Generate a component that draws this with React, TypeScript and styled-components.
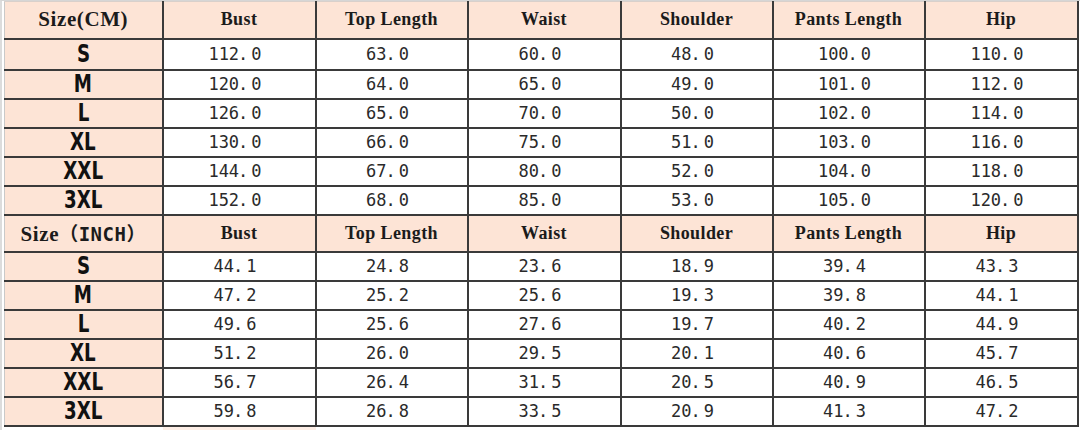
import styled, { createGlobalStyle } from "styled-components";

const GlobalStyle = createGlobalStyle`
  html, body {
    margin: 0;
    padding: 0;
    background: #ffffff;
  }
`;

type Row = { size: string; values: string[] };

const columns = ["Bust", "Top Length", "Waist", "Shoulder", "Pants Length", "Hip"];
const widths = [158, 153, 152, 153, 152, 152, 153];

const cmRows: Row[] = [
  { size: "S", values: ["112.0", "63.0", "60.0", "48.0", "100.0", "110.0"] },
  { size: "M", values: ["120.0", "64.0", "65.0", "49.0", "101.0", "112.0"] },
  { size: "L", values: ["126.0", "65.0", "70.0", "50.0", "102.0", "114.0"] },
  { size: "XL", values: ["130.0", "66.0", "75.0", "51.0", "103.0", "116.0"] },
  { size: "XXL", values: ["144.0", "67.0", "80.0", "52.0", "104.0", "118.0"] },
  { size: "3XL", values: ["152.0", "68.0", "85.0", "53.0", "105.0", "120.0"] },
];

const inchRows: Row[] = [
  { size: "S", values: ["44.1", "24.8", "23.6", "18.9", "39.4", "43.3"] },
  { size: "M", values: ["47.2", "25.2", "25.6", "19.3", "39.8", "44.1"] },
  { size: "L", values: ["49.6", "25.6", "27.6", "19.7", "40.2", "44.9"] },
  { size: "XL", values: ["51.2", "26.0", "29.5", "20.1", "40.6", "45.7"] },
  { size: "XXL", values: ["56.7", "26.4", "31.5", "20.5", "40.9", "46.5"] },
  { size: "3XL", values: ["59.8", "26.8", "33.5", "20.9", "41.3", "47.2"] },
];

// excel-style number: the dot sits in its own wide slot
function Num({ value }: { value: string }) {
  const [a, b] = value.split(".");
  return (
    <>
      {a}
      <Dot>.</Dot>
      {b}
    </>
  );
}

function App() {
  return (
    <>
      <GlobalStyle />
      <Sheet>
        <Table>
          <colgroup>
            {widths.map((w, i) => (
              <col key={i} style={{ width: w }} />
            ))}
          </colgroup>
          <tbody>
            <tr>
              <HeadCell $h={37} $top>
                <SizeTitle>Size(CM)</SizeTitle>
              </HeadCell>
              {columns.map((c) => (
                <HeadCell key={c} $h={37} $top>
                  {c}
                </HeadCell>
              ))}
            </tr>
            {cmRows.map((r, i) => (
              <tr key={r.size}>
                <SizeCell $h={i === 0 ? 31 : 29}>
                  <SizeLabel>{r.size}</SizeLabel>
                </SizeCell>
                {r.values.map((v, j) => (
                  <NumCell key={j} $h={i === 0 ? 31 : 29}>
                    <Num value={v} />
                  </NumCell>
                ))}
              </tr>
            ))}
            <tr>
              <HeadCell $h={37}>
                <SizeTitle>
                  Size<Inch>（INCH）</Inch>
                </SizeTitle>
              </HeadCell>
              {columns.map((c) => (
                <HeadCell key={c} $h={37}>
                  {c}
                </HeadCell>
              ))}
            </tr>
            {inchRows.map((r) => (
              <tr key={r.size}>
                <SizeCell $h={29}>
                  <SizeLabel>{r.size}</SizeLabel>
                </SizeCell>
                {r.values.map((v, j) => (
                  <NumCell key={j} $h={29}>
                    <Num value={v} />
                  </NumCell>
                ))}
              </tr>
            ))}
            <tr>
              {widths.map((_, i) => (
                <TailCell key={i} $pink={i === 1} />
              ))}
            </tr>
          </tbody>
        </Table>
      </Sheet>
    </>
  );
}

export default App;

const Sheet = styled.div`
  width: 1080px;
  height: 430px;
  overflow: hidden;
  box-sizing: border-box;
  padding-left: 2px;
  border-left: 2px solid #dcdcdc;
  border-top: 1px solid #d6d6d6;
  background: #ffffff;
`;

const Table = styled.table`
  border-collapse: collapse;
  table-layout: fixed;
  width: 1073px;
  color: #1b1b1b;
`;

const BaseCell = styled.td<{ $h: number }>`
  height: ${(p) => p.$h}px;
  padding: 0;
  text-align: center;
  vertical-align: middle;
  border: 2px solid #3a3a3a;
  box-sizing: border-box;
  white-space: nowrap;
  &:first-child {
    border-left: 1px solid #c9c9c9;
  }
`;

const HeadCell = styled(BaseCell)<{ $top?: boolean }>`
  background: #fde4d6;
  font-family: "Liberation Serif", "DejaVu Serif", serif;
  font-weight: bold;
  font-size: 18px;
  letter-spacing: 0.4px;
  ${(p) => p.$top && "border-top: 1px solid #d9d0cb;"}
`;

const SizeTitle = styled.span`
  font-size: 21px;
  letter-spacing: 0.6px;
`;

const Inch = styled.span`
  font-family: "DejaVu Sans Mono", "Noto Sans CJK SC", monospace;
  font-size: 19px;
  letter-spacing: 0.5px;
`;

const SizeCell = styled(BaseCell)`
  background: #fde4d6;
`;

const SizeLabel = styled.span`
  display: inline-block;
  font-family: "DejaVu Sans", "Liberation Sans", sans-serif;
  font-weight: bold;
  font-size: 24px;
  line-height: 24px;
  transform: scaleX(0.76);
  color: #111111;
`;

const NumCell = styled(BaseCell)`
  background: #ffffff;
  font-family: "DejaVu Sans Mono", "Liberation Mono", monospace;
  font-size: 17px;
  color: #2a2a2a;
  padding-right: 8px;
`;

const Dot = styled.span`
  margin-left: -1px;
  margin-right: 3px;
`;

const TailCell = styled.td<{ $pink?: boolean }>`
  height: 5px;
  padding: 0;
  border: none;
  background: ${(p) => (p.$pink ? "#fdeee6" : "#ffffff")};
`;
